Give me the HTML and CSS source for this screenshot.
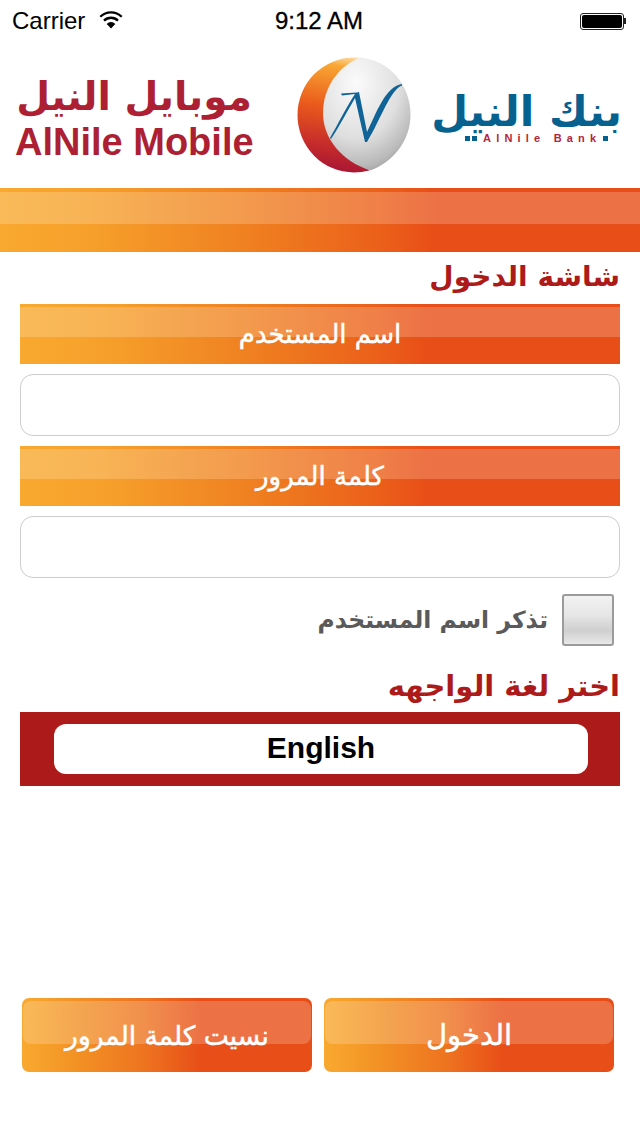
FILE: index.html
```html
<!DOCTYPE html>
<html lang="ar">
<head>
<meta charset="utf-8">
<title>AlNile Mobile</title>
<link rel="stylesheet" href="styles.css">
</head>
<body>
<div class="status" dir="ltr">
  <div class="status-left">
    <span>Carrier</span>
    <svg class="wifi" width="24" height="19" viewBox="0 0 24 19"><path d="M1.300 6.800a15.200 15.200 0 0 1 21.400 0" fill="none" stroke="#000" stroke-width="2.300"/><path d="M5 10.600a10 10 0 0 1 14 0" fill="none" stroke="#000" stroke-width="2.300"/><path d="M12 18.500l-4.300-4.600a6 6 0 0 1 8.600 0z"/></svg>
  </div>
  <div class="status-time">9:12 AM</div>
  <div class="status-right">
    <div class="battery"><div class="battery-level"></div></div>
    <div class="battery-nub"></div>
  </div>
</div>
<header class="brand" dir="ltr">
  <div class="brand-mobile">
    <div class="brand-mobile-ar" dir="rtl">موبايل النيل</div>
    <div class="brand-mobile-en">AlNile Mobile</div>
  </div>
  <svg class="globe" width="114" height="116" viewBox="0 0 114 116">
    <defs>
      <linearGradient id="cres" x1="0.7" y1="0" x2="0.55" y2="1">
        <stop offset="0" stop-color="#fdebc8"/>
        <stop offset="0.12" stop-color="#f9a733"/>
        <stop offset="0.48" stop-color="#ea5a1c"/>
        <stop offset="0.8" stop-color="#c72d2a"/>
        <stop offset="1" stop-color="#ab1833"/>
      </linearGradient>
      <radialGradient id="ball" cx="0.38" cy="0.22" r="0.9">
        <stop offset="0" stop-color="#fbfbfb"/>
        <stop offset="0.55" stop-color="#dfdfdf"/>
        <stop offset="0.82" stop-color="#b9b9b9"/>
        <stop offset="1" stop-color="#8c8c8c"/>
      </radialGradient>
      <clipPath id="cres-clip"><rect x="0" y="0" width="72" height="116"/></clipPath>
    </defs>
    <ellipse cx="57" cy="58" rx="56.500" ry="57.500" fill="url(#cres)" clip-path="url(#cres-clip)"/>
    <path d="M63 .6C92 3 113.500 28 113.500 58C113.500 84 95 106 73 113.500C45 104 26 82 26 56C26 30 42 9 63 .6z" fill="url(#ball)"/>
    <path d="M33 81C41 67 50 49 58 37L45 38.500L44 36.500L60 35.500L62 35L70 75C80 55 88 30 105 27L105 28.500C93 33 84 62 70 85L68 85L58 41C51 53 43 68 34 82z" fill="#0f6397"/>
  </svg>
  <div class="brand-bank">
    <div class="brand-bank-ar" dir="rtl">بنك النيل</div>
    <div class="brand-bank-en"><i class="sq"></i><i class="sq"></i><span>AlNile Bank</span><i class="sq"></i></div>
  </div>
</header>
<div class="band band-top"></div>
<main class="form">
  <h1 class="title title-login">شاشة الدخول</h1>
  <div class="band field-label">اسم المستخدم</div>
  <input class="field" type="text">
  <div class="band field-label">كلمة المرور</div>
  <input class="field" type="password">
  <div class="remember">
    <span class="remember-text">تذكر اسم المستخدم</span>
    <span class="check"></span>
  </div>
  <h2 class="title title-lang">اختر لغة الواجهه</h2>
  <div class="lang-bar"><div class="lang-btn" dir="ltr">English</div></div>
  <div class="actions" dir="ltr">
    <button class="action" type="button"><span class="action-text">نسيت كلمة المرور</span></button>
    <button class="action" type="button"><span class="action-text action-text-login">الدخول</span></button>
  </div>
</main>
</body>
</html>
```
FILE: styles.css
```css
* { box-sizing: border-box; }
html, body { margin: 0; padding: 0; }
body {
  width: 640px;
  height: 1136px;
  overflow: hidden;
  background: #fff;
  font-family: "DejaVu Sans", "Liberation Sans", sans-serif;
}
.status {
  height: 40px;
  display: grid;
  grid-template-columns: 1fr auto 1fr;
  align-items: center;
  padding: 2px 14px 0 12px;
  font-family: "Liberation Sans", sans-serif;
  font-size: 24px;
  color: #000;
}
.status-left { display: flex; align-items: center; gap: 14px; }
.wifi { margin-top: -3px; }
.status-time { font-size: 24px; -webkit-text-stroke: 0.3px #000; }
.status-right { display: flex; align-items: center; justify-content: flex-end; }
.battery {
  width: 44px;
  height: 17px;
  border: 1px solid #222;
  border-radius: 3px;
  padding: 1px;
}
.battery-level { height: 100%; background: #000; border-radius: 2px; }
.battery-nub { width: 2px; height: 6px; background: #222; }

.brand {
  height: 148px;
  display: flex;
  align-items: center;
  padding: 0 18px 0 15px;
}
.brand-mobile { width: 282px; margin-top: 8px; }
.brand-mobile-ar {
  width: 238px;
  text-align: center;
  font-weight: 700;
  font-size: 39px;
  line-height: 48px;
  color: #ad1f33;
}
.brand-mobile-en {
  font-family: "Liberation Sans", sans-serif;
  font-weight: 700;
  font-size: 38px;
  line-height: 42px;
  color: #ad1f33;
}
.globe { flex: none; margin-top: 2px; }
.brand-bank { margin-left: 21px; width: 190px; margin-top: 8px; }
.brand-bank-ar {
  text-align: center;
  white-space: nowrap;
  font-weight: 700;
  font-size: 42.500px;
  line-height: 40px;
  color: #06618f;
}
.brand-bank-en {
  display: flex;
  align-items: center;
  gap: 2px;
  padding-left: 33px;
  font-family: "Liberation Sans", sans-serif;
  font-weight: 700;
  font-size: 11px;
  letter-spacing: 5.200px;
  line-height: 12px;
  color: #b3263a;
}
.brand-bank-en span { margin: 0 0 0 4px; white-space: nowrap; }
.sq { flex: none; display: block; width: 5px; height: 5px; background: #06618f; }

.band {
  background:
    linear-gradient(180deg,
      rgba(255,255,255,0) 0, rgba(255,255,255,0) 3px,
      rgba(255,255,255,.2) 3px, rgba(255,255,255,.2) 33px,
      rgba(255,255,255,0) 33px),
    linear-gradient(90deg, #f9a92f 0, #f6a02b 14%, #ef7e20 40%, #eb5f1a 60%, #e84e17 68%, #e84e17 100%);
}
.band-top {
  height: 64px;
  background:
    linear-gradient(180deg,
      rgba(255,255,255,0) 0, rgba(255,255,255,0) 4px,
      rgba(255,255,255,.2) 4px, rgba(255,255,255,.2) 36px,
      rgba(255,255,255,0) 36px),
    linear-gradient(90deg, #f9a92f 0, #f6a02b 14%, #ef7e20 40%, #eb5f1a 60%, #e84e17 68%, #e84e17 100%);
}
.form {
  padding: 0 20px;
  display: flex;
  flex-direction: column;
}
.title { margin: 0; color: #ad1a1a; font-weight: 700; text-align: right; }
.title-login { height: 52px; font-size: 28px; line-height: 50px; }
.field-label {
  height: 60px;
  display: flex;
  align-items: center;
  justify-content: center;
  color: #fff;
  font-size: 26px;
  font-weight: 400;
  -webkit-text-stroke: 0.5px #fff;
}
.field {
  display: block;
  width: 100%;
  height: 62px;
  margin: 10px 0;
  padding: 0 12px;
  background: #fff;
  border: 1px solid #cdcdcd;
  border-radius: 13px;
  outline: none;
}
.remember {
  display: flex;
  align-items: center;
  justify-content: flex-end;
  gap: 14px;
  margin-top: 6px;
  padding-right: 6px;
  height: 52px;
}
.remember-text { font-size: 23.500px; font-weight: 700; color: #5a5a5a; }
.check {
  width: 52px;
  height: 52px;
  border: 2px solid #9b9b9b;
  border-radius: 3px;
  background: linear-gradient(180deg, #f2f2f2 0, #e6e6e6 40%, #cfcfcf 72%, #e8e8e8 100%);
}
.title-lang { height: 66px; font-size: 29px; line-height: 80px; }
.lang-bar {
  height: 74px;
  padding: 12px 32px 12px 34px;
  background: #ad1a1a;
}
.lang-btn {
  height: 50px;
  background: #fff;
  border-radius: 12px;
  color: #000;
  font-family: "Liberation Sans", sans-serif;
  font-weight: 700;
  font-size: 30px;
  line-height: 48px;
  text-align: center;
}
.actions {
  display: flex;
  gap: 12px;
  margin-top: 212px;
  padding: 0 6px 0 2px;
}
.action {
  position: relative;
  width: 290px;
  height: 74px;
  padding: 0;
  border: 0;
  border-radius: 7px;
  background: linear-gradient(90deg, #f9a92f 0, #f29024 20%, #ee7420 42%, #e84e17 62%, #e84e17 100%);
  color: #fff;
  font-family: inherit;
  font-size: 26.500px;
  -webkit-text-stroke: 0.5px #fff;
  overflow: hidden;
}
.action::before {
  content: "";
  position: absolute;
  left: 1px;
  right: 1px;
  top: 3px;
  height: 43px;
  border-radius: 8px;
  background: rgba(255,255,255,.2);
}
.action-text { position: relative; }
.action-text-login { font-size: 29px; }
```
